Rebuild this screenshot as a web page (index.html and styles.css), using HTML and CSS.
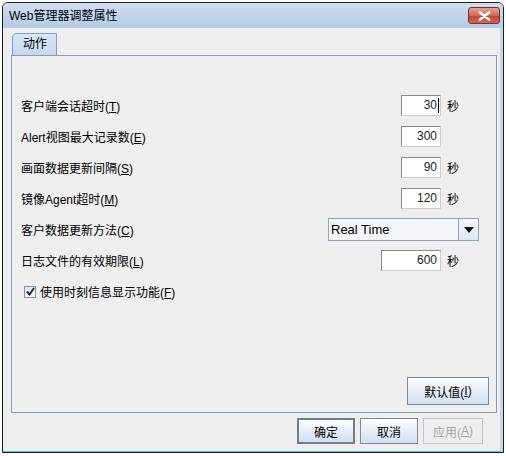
FILE: index.html
```html
<!DOCTYPE html>
<html>
	<head>
		<meta charset="UTF-8">
		<title>Web管理器调整属性</title>
		<link rel="stylesheet" href="styles.css">
	</head>
	<body>
		<div class="window">
			<div class="titlebar">
				<span class="title">Web管理器调整属性</span>
				<span class="close">
					<svg width="13" height="10" viewBox="0 0 13 10"><path d="M2 1.5 L11 8.5 M11 1.5 L2 8.5" stroke="#fff" stroke-width="2.6" stroke-linecap="round"/></svg>
				</span>
			</div>
			<div class="main">
				<div class="tabs">
					<div class="tab">动作</div>
				</div>
				<div class="panel">
					<div class="rows">
						<div class="row">
							<span class="label">客户端会话超时(<u>T</u>)</span>
							<span class="field">30<i class="caret"></i></span>
							<span class="unit">秒</span>
						</div>
						<div class="row">
							<span class="label">Alert视图最大记录数(<u>E</u>)</span>
							<span class="field">300</span>
							<span class="unit"></span>
						</div>
						<div class="row">
							<span class="label">画面数据更新间隔(<u>S</u>)</span>
							<span class="field">90</span>
							<span class="unit">秒</span>
						</div>
						<div class="row">
							<span class="label">镜像Agent超时(<u>M</u>)</span>
							<span class="field">120</span>
							<span class="unit">秒</span>
						</div>
						<div class="row">
							<span class="label">客户数据更新方法(<u>C</u>)</span>
							<span class="combo">
								<span class="combo-text">Real Time</span>
								<span class="combo-btn"><svg width="10" height="6" viewBox="0 0 10 6"><path d="M0 0 L10 0 L5 6 Z" fill="#111"/></svg></span>
							</span>
						</div>
						<div class="row">
							<span class="label">日志文件的有效期限(<u>L</u>)</span>
							<span class="field wide">600</span>
							<span class="unit">秒</span>
						</div>
						<div class="row">
							<span class="check">
								<svg width="9" height="9" viewBox="0 0 9 9"><path d="M1 4.5 L3.5 7.5 L8 1" stroke="#1c2c44" stroke-width="2" fill="none"/></svg>
							</span>
							<span class="label">使用时刻信息显示功能(<u>F</u>)</span>
						</div>
					</div>
					<div class="panel-foot">
						<span class="btn default-val">默认值(<u>I</u>)</span>
					</div>
				</div>
				<div class="footer">
					<span class="btn primary">确定</span>
					<span class="btn">取消</span>
					<span class="btn disabled">应用(<u>A</u>)</span>
				</div>
			</div>
		</div>
	</body>
</html>
```

FILE: styles.css
```css
*{
	margin: 0;
	padding: 0;
	box-sizing: border-box;
}
body{
	background: #fff;
	padding: 2px 0 0 2px;
	font: 12px "Liberation Sans", "Noto Sans CJK SC", sans-serif;
	color: #000;
}
.window{
	width: 502px;
	height: 451px;
	border: 1px solid #1e1e1e;
	border-radius: 6px 6px 0 0;
	background: #c4d7ec;
	display: flex;
	flex-direction: column;
	overflow: hidden;
}
.titlebar{
	height: 25px;
	flex: none;
	display: flex;
	align-items: flex-start;
	justify-content: space-between;
	background: linear-gradient(#d0def0, #b3cbe6);
	padding: 0 3px 0 6px;
}
.title{
	margin-top: 6px;
	line-height: 14px;
	font-size: 12px;
}
.close{
	margin-top: 4px;
	width: 32px;
	height: 17px;
	border: 1px solid #7c3128;
	border-radius: 3px;
	background: linear-gradient(#e6a493, #d06a58 50%, #c0442f 51%, #cf6a52);
	display: flex;
	align-items: center;
	justify-content: center;
}
.main{
	flex: 1;
	background: #eeeeee;
	border-right: 3px solid #c4d7ec;
	border-bottom: 1px solid #4cc3e4;
	padding: 5px 0 0 8px;
	display: flex;
	flex-direction: column;
}
.tabs{
	height: 22px;
	display: flex;
	margin-left: 1px;
}
.tab{
	width: 45px;
	border: 1px solid #7d9ed2;
	border-bottom: none;
	border-radius: 5px 2px 0 0;
	background: linear-gradient(#d9e7f6, #c3d8ef);
	padding: 3px 0 0 10px;
	line-height: 15px;
}
.panel{
	width: 486px;
	height: 358px;
	border: 1px solid #8c9cb0;
	border-left-color: #7d9ed2;
	display: flex;
	flex-direction: column;
}
.rows{
	padding: 34px 17px 0 9px;
}
.row{
	height: 31px;
	display: flex;
	align-items: center;
}
.label{
	flex: 1;
	white-space: nowrap;
}
.field{
	width: 40px;
	height: 21px;
	background: #fff;
	border: 1px solid;
	border-color: #8a8a8a #cdcdcd #cdcdcd #8a8a8a;
	text-align: right;
	padding-right: 3px;
	line-height: 19px;
	color: #222;
	position: relative;
}
.field.wide{
	width: 60px;
}
.caret{
	position: absolute;
	right: 1px;
	top: 2px;
	width: 1px;
	height: 15px;
	background: #000;
}
.unit{
	width: 38px;
	padding-left: 6px;
}
.combo{
	width: 151px;
	height: 23px;
	border: 1px solid #8aa2c0;
	background: #f3f5f8;
	display: flex;
}
.combo-text{
	flex: 1;
	font-size: 13px;
	line-height: 21px;
	padding-left: 2px;
}
.combo-btn{
	width: 20px;
	border-left: 1px solid #8aa2c0;
	background: linear-gradient(#f6f8fb, #dde6f0);
	display: flex;
	align-items: center;
	justify-content: center;
}
.check{
	width: 12px;
	height: 12px;
	border: 1px solid #8393a8;
	background: linear-gradient(#dfe6ee, #fafcfe);
	margin: 0 4px 0 3px;
	display: flex;
	align-items: center;
	justify-content: center;
}
.panel-foot{
	margin-top: auto;
	display: flex;
	justify-content: flex-end;
	padding: 0 7px 7px 0;
}
.btn{
	display: flex;
	align-items: center;
	justify-content: center;
	height: 26px;
	width: 58px;
	border: 1px solid #7a8a9c;
	background: linear-gradient(#fdfeff, #e6eef8 50%, #d0e0f1);
	white-space: nowrap;
}
.default-val{
	width: 82px;
	height: 28px;
}
.footer{
	display: flex;
	justify-content: flex-end;
	gap: 5px;
	padding: 5px 17px 0 0;
}
.btn.primary{
	border: 2px solid #6f7f93;
}
.btn.disabled{
	width: 60px;
	border-color: #c2c2c2;
	background: #eeeeee;
	color: #a3a3a3;
}
```
